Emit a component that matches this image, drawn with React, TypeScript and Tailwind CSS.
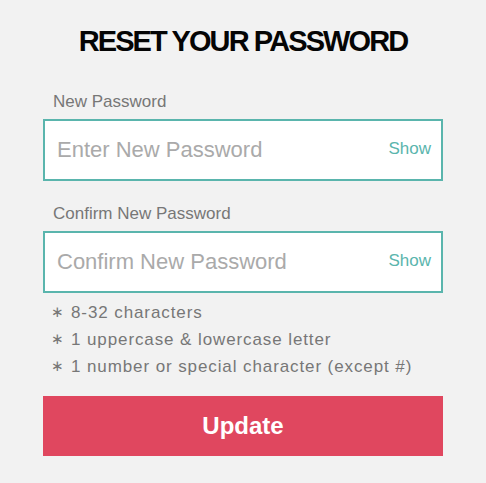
import { useState } from 'react';

const rules = ['8-32 characters', '1 uppercase & lowercase letter', '1 number or special character (except #)'];

function PasswordField({ id, label, placeholder }: { id: string; label: string; placeholder: string }) {
  const [visible, setVisible] = useState(false);

  return (
    <div className="flex flex-col">
      <label htmlFor={id} className="pl-[10px] text-[17px] leading-[20px] text-[#777777]">
        {label}
      </label>
      <div className="mt-[7px] flex h-[62px] items-center border-2 border-[#5ab5ad] bg-white pl-[12px] pr-[10px]">
        <input
          id={id}
          type={visible ? 'text' : 'password'}
          placeholder={placeholder}
          className="min-w-0 flex-1 bg-transparent text-[22px] leading-[28px] text-[#333333] outline-none placeholder:text-[#aaaaaa]"
        />
        <button
          type="button"
          onClick={() => setVisible((v) => !v)}
          className="pb-[2px] text-[17px] leading-[20px] text-[#5ab5ad]"
        >
          {visible ? 'Hide' : 'Show'}
        </button>
      </div>
    </div>
  );
}

export default function App() {
  return (
    <div className="h-screen w-full bg-[#f2f2f2] font-['Liberation_Sans',Arial,sans-serif]">
      <div className="mx-auto flex w-[400px] flex-col pt-[25px]">
        <h1 className="text-center text-[29px] font-bold leading-[32px] tracking-[-1.9px] text-[#050505]">
          RESET YOUR PASSWORD
        </h1>

        <form className="mt-[35px] flex flex-col" onSubmit={(e) => e.preventDefault()}>
          <PasswordField id="new-password" label="New Password" placeholder="Enter New Password" />
          <div className="mt-[23px]">
            <PasswordField id="confirm-password" label="Confirm New Password" placeholder="Confirm New Password" />
          </div>

          <ul className="mt-[6px] flex flex-col">
            {rules.map((rule) => (
              <li key={rule} className="flex h-[27px] items-center text-[17px] leading-[27px] text-[#777777]">
                <span className="ml-[8px] w-[20px] font-['DejaVu_Sans',sans-serif] text-[15px]">∗</span>
                <span className="tracking-[0.9px]">{rule}</span>
              </li>
            ))}
          </ul>

          <button
            type="submit"
            className="mt-[16px] h-[60px] w-full bg-[#e0475f] text-[24px] font-bold leading-[30px] text-white"
          >
            Update
          </button>
        </form>
      </div>
    </div>
  );
}
